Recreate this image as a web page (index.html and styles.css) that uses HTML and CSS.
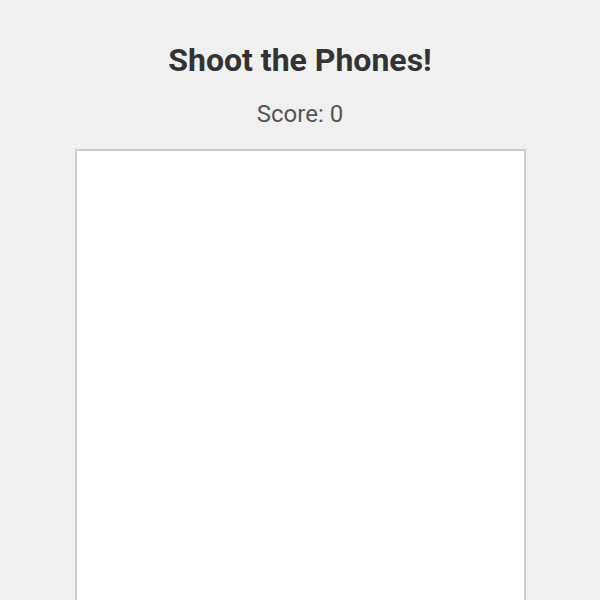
FILE: index.html
```html
<!DOCTYPE html>
<html lang="en">
<head>
    <meta charset="UTF-8">
    <meta name="viewport" content="width=device-width, initial-scale=1.0">
    <title>Shoot the Phones!</title>
    <link rel="stylesheet" href="styles.css">
</head>
<body>
    <h1>Shoot the Phones!</h1>
    <div id="score">Score: 0</div>
    <div id="game-area"></div>
</body>
</html>
```

FILE: styles.css
```css
body {
    font-family: Roboto, Arial, sans-serif;
    margin: 0;
    padding: 20px;
    background-color: #f0f0f0;
    text-align: center;
    color: #333;
}
h1 {
    font-size: 32px;
    margin: 21px 0;
}
#score {
    font-size: 24px;
    color: #555;
    margin-bottom: 21px;
}
#game-area {
    width: 447px;
    height: 600px;
    margin: 0 auto;
    background-color: #ffffff;
    border: 2px solid #ccc;
}
```
